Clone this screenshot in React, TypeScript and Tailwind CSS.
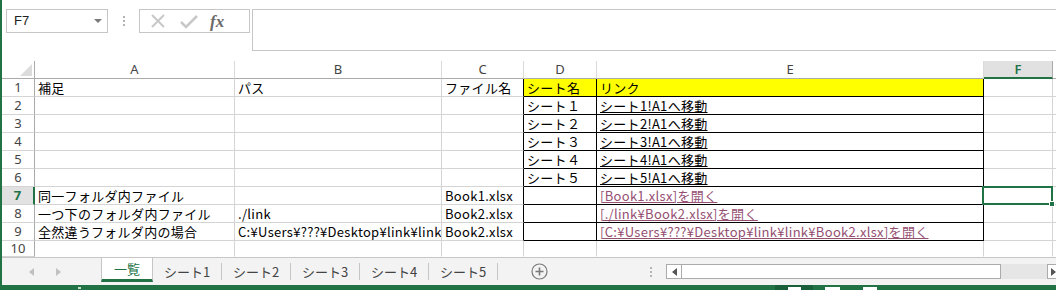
import React from "react";

type Cell = { text?: string; link?: "black" | "visited"; yellow?: boolean };

// column widths incl. right border
const colW = ["w-[200px]", "w-[207px]", "w-[82px]", "w-[73px]", "w-[387px]", "w-[69px]"];
const colLetters = ["A", "B", "C", "D", "E", "F"];

const rows: Cell[][] = [
  [{ text: "補足" }, { text: "パス" }, { text: "ファイル名" }, { text: "シート名", yellow: true }, { text: "リンク", yellow: true }, {}],
  [{}, {}, {}, { text: "シート１" }, { text: "シート1!A1へ移動", link: "black" }, {}],
  [{}, {}, {}, { text: "シート２" }, { text: "シート2!A1へ移動", link: "black" }, {}],
  [{}, {}, {}, { text: "シート３" }, { text: "シート3!A1へ移動", link: "black" }, {}],
  [{}, {}, {}, { text: "シート４" }, { text: "シート4!A1へ移動", link: "black" }, {}],
  [{}, {}, {}, { text: "シート５" }, { text: "シート5!A1へ移動", link: "black" }, {}],
  [{ text: "同一フォルダ内ファイル" }, {}, { text: "Book1.xlsx" }, {}, { text: "[Book1.xlsx]を開く", link: "visited" }, {}],
  [{ text: "一つ下のフォルダ内ファイル" }, { text: "./link" }, { text: "Book2.xlsx" }, {}, { text: "[./link¥Book2.xlsx]を開く", link: "visited" }, {}],
  [{ text: "全然違うフォルダ内の場合" }, { text: "C:¥Users¥???¥Desktop¥link¥link" }, { text: "Book2.xlsx" }, {}, { text: "[C:¥Users¥???¥Desktop¥link¥link¥Book2.xlsx]を開く", link: "visited" }, {}],
  [{}, {}, {}, {}, {}, {}],
];

const tabs = ["シート1", "シート2", "シート3", "シート4", "シート5"];

function FormulaBar() {
  return (
    <div className="flex h-[61px] items-start pl-[4px] pt-[9px]">
      <div className="flex h-[24px] w-[102px] items-center justify-between border border-[#c6c6c6] pl-[7px] pr-[5px] text-[13px] text-[#222]" style={{ fontFamily: "'Liberation Sans', sans-serif" }}>
        <span>F7</span>
        <svg width="8" height="5" viewBox="0 0 8 5">
          <path d="M0 0 L8 0 L4 4 Z" fill="#7a7a7a" />
        </svg>
      </div>
      <div className="flex h-[24px] w-[31px] flex-col items-center justify-center gap-[2px]">
        <div className="h-[2px] w-[2px] bg-[#b4b4b4]" />
        <div className="h-[2px] w-[2px] bg-[#b4b4b4]" />
        <div className="h-[2px] w-[2px] bg-[#b4b4b4]" />
      </div>
      <div className="flex h-[24px] w-[111px] items-center border border-[#c6c6c6]">
        <svg className="ml-[10px]" width="16" height="16" viewBox="0 0 16 16">
          <path d="M2 2 L14 14 M14 2 L2 14" stroke="#c8c8c8" strokeWidth="2" />
        </svg>
        <svg className="ml-[14px]" width="18" height="16" viewBox="0 0 18 16">
          <path d="M1 9 L6 14 L17 3" stroke="#c8c8c8" strokeWidth="2.6" fill="none" />
        </svg>
        <span className="ml-[12px] text-[17px] font-bold italic leading-none text-[#6a6a6a]" style={{ fontFamily: "'Liberation Serif', serif" }}>
          fx
        </span>
      </div>
      <div className="ml-[2px] h-[42px] flex-1 border border-r-0 border-[#c6c6c6] bg-white" />
    </div>
  );
}

function HeaderRow() {
  return (
    <div className="flex h-[18px] text-[13px] text-[#444]" style={{ fontFamily: "'Noto Sans', sans-serif" }}>
      <div className="flex h-full w-[33px] items-end justify-end border-r border-b border-[#ababab] pb-[2px] pr-[2px]">
        <svg width="12" height="12" viewBox="0 0 12 12">
          <path d="M12 0 L12 12 L0 12 Z" fill="#dcdcdc" />
        </svg>
      </div>
      {colLetters.map((l, i) =>
        l === "F" ? (
          <div key={l} className={`${colW[i]} flex h-full items-center justify-center border-r border-b-2 border-r-[#ababab] border-b-[#217346] bg-[#e1e1e1] font-semibold text-[#217346] leading-none`}>
            {l}
          </div>
        ) : (
          <div key={l} className={`${colW[i]} flex h-full items-center justify-center border-r border-b border-r-[#dadada] border-b-[#ababab] leading-none`}>
            {l}
          </div>
        )
      )}
      <div className="h-full flex-1 border-b border-[#ababab]" />
    </div>
  );
}

function SheetRow({ cells, n }: { cells: Cell[]; n: number }) {
  const last = n === 10;
  const sel = n === 7;
  const inBlock = n <= 9;
  return (
    <div className={`flex ${last ? "h-[16px]" : "h-[18px]"}`}>
      <div
        className={`flex h-full w-[33px] items-center justify-center border-b text-[13px] leading-none ${
          sel ? "border-r-2 border-r-[#217346] border-b-[#d4d4d4] bg-[#e1e1e1] font-bold text-[#217346]" : "border-r border-r-[#ababab] border-b-[#d4d4d4] text-[#444]"
        }`}
        style={{ fontFamily: "'Noto Sans', sans-serif" }}
      >
        {n}
      </div>
      {cells.map((c, i) => {
        const blackR = inBlock && (i === 2 || i === 3 || i === 4);
        const blackB = inBlock && (i === 3 || i === 4);
        const cls = [
          colW[i],
          "relative flex h-full items-end whitespace-nowrap border-r border-b pl-[3px]",
          i === 5 && sel ? "overflow-visible" : "overflow-hidden",
          blackR ? "border-r-black" : "border-r-[#d4d4d4]",
          blackB ? "border-b-black" : last ? "border-b-transparent" : "border-b-[#d4d4d4]",
          c.yellow ? "bg-[#ffff00]" : "",
        ].join(" ");
        const txt =
          c.link === "black"
            ? "text-black underline decoration-1 underline-offset-[1px]"
            : c.link === "visited"
            ? "text-[#954f72] underline decoration-1 underline-offset-[1px]"
            : "text-black";
        return (
          <div key={i} className={cls}>
            {c.text && (
              <span className={`text-[13px] leading-[16px] tracking-[0.3px] ${txt}`} style={{ fontFamily: "'Noto Sans CJK JP', sans-serif" }}>
                {c.text}
              </span>
            )}
            {i === 5 && sel && (
              <div className="absolute left-[-2px] top-[-1px] z-10 h-[19px] w-[71px] border-2 border-[#217346]">
                <div className="absolute bottom-[-4px] right-[-4px] h-[6px] w-[6px] border border-white bg-[#217346]" />
              </div>
            )}
          </div>
        );
      })}
      <div className={`h-full flex-1 border-b ${last ? "border-transparent" : "border-[#d4d4d4]"}`} />
    </div>
  );
}

function TabBar() {
  return (
    <div className="flex h-[28px] border-t border-[#c6c6c6] bg-[#f3f3f3] text-[13px]" style={{ fontFamily: "'Noto Sans CJK JP', sans-serif" }}>
      <div className="flex w-[99px] items-center pl-[26px]">
        <svg width="6" height="8" viewBox="0 0 6 8">
          <path d="M6 0 L6 8 L1 4 Z" fill="#c0c0c0" />
        </svg>
        <svg className="ml-[22px]" width="6" height="8" viewBox="0 0 6 8">
          <path d="M0 0 L0 8 L5 4 Z" fill="#c0c0c0" />
        </svg>
      </div>
      <div className="mt-[-1px] flex h-[25px] w-[52px] items-center justify-center border-x border-t border-[#c6c6c6] border-b-[3px] border-b-[#217346] bg-white text-[#217346]">
        一覧
      </div>
      {tabs.map((t) => (
        <div key={t} className="flex h-full w-[69px] items-center py-[4px]">
          <div className="flex h-full flex-1 items-center justify-center text-[#444]">{t}</div>
          <div className="h-[17px] w-px bg-[#c6c6c6]" />
        </div>
      ))}
      <div className="flex w-[82px] items-center justify-center pl-[1px]">
        <svg width="17" height="17" viewBox="0 0 17 17">
          <circle cx="8.5" cy="8.5" r="7.5" fill="none" stroke="#7a7a7a" strokeWidth="1.2" />
          <path d="M8.5 4.5 V12.5 M4.5 8.5 H12.5" stroke="#7a7a7a" strokeWidth="1.6" />
        </svg>
      </div>
      <div className="flex flex-1 items-center pl-[70px]">
        <div className="flex flex-col gap-[2px]">
          <div className="h-[2px] w-[2px] bg-[#b4b4b4]" />
          <div className="h-[2px] w-[2px] bg-[#b4b4b4]" />
          <div className="h-[2px] w-[2px] bg-[#b4b4b4]" />
        </div>
        <div className="ml-[14px] flex h-[15px] w-[16px] items-center justify-center border border-[#ababab] bg-white">
          <svg width="5" height="8" viewBox="0 0 5 8">
            <path d="M5 0 L5 8 L0 4 Z" fill="#555" />
          </svg>
        </div>
        <div className="h-[15px] w-[319px] border border-l-0 border-[#ababab] bg-white" />
        <div className="h-[15px] w-[46px] bg-[#e6e6e6]" />
        <div className="flex h-[15px] flex-1 items-center border border-r-0 border-[#ababab] bg-white pl-[3px]">
          <svg width="5" height="8" viewBox="0 0 5 8">
            <path d="M0 0 L0 8 L5 4 Z" fill="#555" />
          </svg>
        </div>
      </div>
    </div>
  );
}

function StatusBar() {
  return (
    <div className="flex h-[5px] bg-[#217346]">
      <div className="ml-[76px] mt-[2px] h-[2px] w-[3px] bg-[#c8dccf]" />
      <div className="ml-[694px] flex h-full w-[38px] justify-center bg-[#19603a] pt-[2px]">
        <div className="h-[3px] w-[13px] bg-white" />
      </div>
      <div className="ml-[12px] mt-[2px] h-[3px] w-[15px] bg-white" />
      <div className="ml-[23px] mt-[2px] h-[3px] w-[14px] bg-white" />
    </div>
  );
}

export default function App() {
  return (
    <div className="h-[290px] w-[1056px] overflow-hidden border-l-2 border-[#217346] bg-white">
      <FormulaBar />
      <HeaderRow />
      {rows.map((r, i) => (
        <SheetRow key={i} cells={r} n={i + 1} />
      ))}
      <TabBar />
      <StatusBar />
    </div>
  );
}
